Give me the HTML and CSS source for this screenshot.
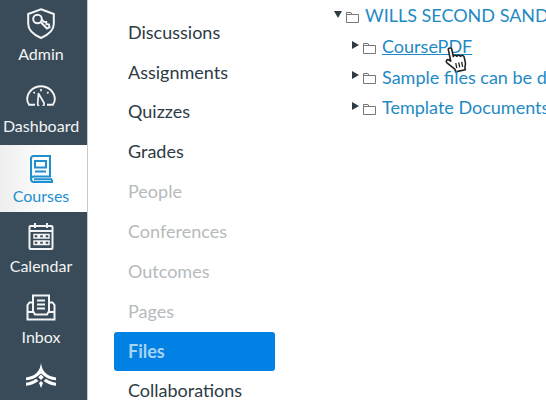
FILE: index.html
```html
<!DOCTYPE html>
<html lang="en">
<head>
<meta charset="utf-8">
<title>Files</title>
<link rel="stylesheet" href="styles.css">
</head>
<body>
<div class="app">
  <nav class="global">
    <a class="gitem admin">
      <svg class="gicon" width="28" height="31" viewBox="0 0 28 31" fill="none" stroke="currentColor" stroke-width="2"><path d="M14 1.200 26.800 6v10c0 6.500-5 10.500-12.800 14C6.200 26.500 1.200 22.500 1.200 16V6z"/><circle cx="10.500" cy="11" r="4.300"/><path d="M13.500 14 20 20.500l2.500-1.200-.6-2.800-2.400-.3-.3-2.200-2.400-.3-2.300-2.200"/></svg>
      <span>Admin</span>
    </a>
    <a class="gitem dash">
      <svg class="gicon" width="30" height="21" viewBox="0 0 30 21" fill="none" stroke="currentColor" stroke-width="1.900"><path d="M9 19.800H3.200C1.800 18 1.200 16 1.200 14.500 1.200 7 7.500 1.200 15 1.200S28.800 7 28.800 14.500c0 1.500-.6 3.500-2 5.300H21"/><path d="M12.500 8.500l5 8.500a3.200 3.200 0 1 1-5.800 1.500z" stroke-width="1.700" stroke-linejoin="round"/><path d="M15 4v2.200M7.500 7l1.300 1.300M22.500 7l-1.300 1.300" stroke-width="1.700"/></svg>
      <span>Dashboard</span>
    </a>
    <a class="gitem courses">
      <svg class="gicon" width="24" height="29" viewBox="0 0 24 29" fill="none" stroke="currentColor" stroke-width="2"><path d="M2 24V3.500A2.500 2.500 0 0 1 4.500 1H21v20.500H4.500A2.700 2.700 0 0 0 2 24a3 3 0 0 0 3 3h18v-2.500"/><rect x="6" y="6" width="11" height="6.500"/><path d="M6 16.500h11M5 24.300h18"/></svg>
      <span>Courses</span>
    </a>
    <a class="gitem cal">
      <svg class="gicon" width="26" height="28" viewBox="0 0 26 28" fill="none" stroke="currentColor" stroke-width="2"><rect x="1.500" y="4" width="23" height="23" rx="1"/><path d="M7 1v5M19 1v5M1.500 9h23"/><path d="M6 12.500h4v3.500H6zM11.500 12.500h4v3.500h-4zM17 12.500h4v3.500h-4zM6 19h4v3.500H6zM11.500 19h4v3.500h-4zM17 19h4v3.500h-4z" stroke-width="1.500"/></svg>
      <span>Calendar</span>
    </a>
    <a class="gitem inbox">
      <svg class="gicon" width="30" height="27" viewBox="0 0 30 27" fill="none" stroke="currentColor" stroke-width="2"><path d="M7 17V1.500h16V17"/><path d="M11 6.500h8M11 10.500h8M11 14.500h8"/><path d="M7 8.500H3.500L1.500 11v14.500h27V11l-2-2.500H23"/><path d="M1.500 18h6l1.500 2.500h12l1.500-2.500h6"/></svg>
      <span>Inbox</span>
    </a>
    <a class="gitem logo">
      <svg class="gicon" width="30" height="25" viewBox="0 0 30 25" fill="#fff"><path d="M15 0c.8 5 2 7.500 4.500 10 2.800 2.600 6 3.800 10.500 4.500v2.800c-5.500-.5-9.500-2.300-12.500-4.800L15 10.500l-2.500 2c-3 2.500-7 4.300-12.500 4.800v-2.800c4.500-.7 7.700-1.900 10.500-4.500C13 7.500 14.200 5 15 0z"/><path d="M15 11.500l2.800 2.800-2.800 2.800-2.800-2.800zM10 15.800c-3 2.200-6 3.400-10 4v3c5-.6 8.700-2.200 12.500-4.800zM20 15.800c3 2.200 6 3.400 10 4v3c-5-.6-8.700-2.200-12.500-4.800z"/><path d="M15 18l2 2-2 5-2-5z"/></svg>
    </a>
  </nav>
  <nav class="course">
    <a class="citem">Discussions</a>
    <a class="citem">Assignments</a>
    <a class="citem">Quizzes</a>
    <a class="citem">Grades</a>
    <a class="citem off">People</a>
    <a class="citem off">Conferences</a>
    <a class="citem off">Outcomes</a>
    <a class="citem off">Pages</a>
    <a class="citem active">Files</a>
    <a class="citem">Collaborations</a>
  </nav>
  <main class="tree">
    <div class="row root">
      <svg class="arrow" width="8" height="7" viewBox="0 0 8 7"><path d="M0 0h8L4 7z"/></svg>
      <svg class="folder" width="13" height="12" viewBox="0 0 13 12" fill="none" stroke="#777" stroke-width="1"><path d="M.5 11.500V1.500h4.500l1 2h6.500v8zM.5 3.500h5.500"/></svg>
      <a class="name">WILLS SECOND SANDBOX</a>
    </div>
    <div class="row child">
      <svg class="arrow" width="7" height="8" viewBox="0 0 7 8"><path d="M0 0l7 4-7 4z"/></svg>
      <svg class="folder" width="13" height="12" viewBox="0 0 13 12" fill="none" stroke="#777" stroke-width="1"><path d="M.5 11.500V1.500h4.500l1 2h6.500v8zM.5 3.500h5.500"/></svg>
      <a class="name hover">CoursePDF</a>
      <svg class="cursor" width="24" height="27" viewBox="0 0 24 27"><path d="M6.500 2.500c0-2 3.500-2 3.500 0V10c1-1.500 3-1 3.500.5 1-1.200 3-.8 3.500 .8 1.200-1 3.500-.3 3.500 1.700v5.500c0 2-1 3-1.500 5v2H9v-2.500L2.500 15c-1.500-2 .8-4 2.500-2.500l1.500 1.500z" fill="#fff" stroke="#222" stroke-width="1.600" stroke-linejoin="round"/><path d="M11 17v5M14 17v5M17 17v5" stroke="#222" stroke-width="1.300"/></svg>
    </div>
    <div class="row child">
      <svg class="arrow" width="7" height="8" viewBox="0 0 7 8"><path d="M0 0l7 4-7 4z"/></svg>
      <svg class="folder" width="13" height="12" viewBox="0 0 13 12" fill="none" stroke="#777" stroke-width="1"><path d="M.5 11.500V1.500h4.500l1 2h6.500v8zM.5 3.500h5.500"/></svg>
      <a class="name">Sample files can be deleted</a>
    </div>
    <div class="row child">
      <svg class="arrow" width="7" height="8" viewBox="0 0 7 8"><path d="M0 0l7 4-7 4z"/></svg>
      <svg class="folder" width="13" height="12" viewBox="0 0 13 12" fill="none" stroke="#777" stroke-width="1"><path d="M.5 11.500V1.500h4.500l1 2h6.500v8zM.5 3.500h5.500"/></svg>
      <a class="name">Template Documents</a>
    </div>
  </main>
</div>
</body>
</html>
```
FILE: styles.css
```css
html, body {
  margin: 0;
  padding: 0;
  height: 100%;
  overflow: hidden;
  background: #fff;
}

.app {
  display: flex;
  width: 546px;
  height: 400px;
  overflow: hidden;
  font-family: Lato, "Liberation Sans", sans-serif;
}

.global {
  flex: 0 0 88px;
  box-sizing: border-box;
  display: flex;
  flex-direction: column;
  background: #394b58;
  border-right: 1px solid #c8c8c8;
  color: #fff;
  overflow: hidden;
}

.gitem {
  flex: 0 0 auto;
  box-sizing: border-box;
  display: flex;
  flex-direction: column;
  align-items: center;
  padding-right: 5px;
  font-size: 16px;
  line-height: 20px;
  color: #f2f4f5;
}

.gicon {
  display: block;
}

.admin { height: 73px; padding-top: 8px; }
.admin .gicon { margin-bottom: 5px; }

.dash { height: 72px; padding-top: 12px; }
.dash .gicon { margin-bottom: 10px; }

.courses {
  height: 67px;
  padding-top: 10px;
  background: linear-gradient(90deg, #eeeeee, #ffffff 60%);
  color: #1f8fd0;
}
.courses .gicon { margin-bottom: 2px; }

.cal { height: 72px; padding-top: 10px; }
.cal .gicon { margin-bottom: 6px; }

.inbox { height: 71px; padding-top: 10px; }
.inbox .gicon { margin-bottom: 6px; }

.logo { padding-top: 8px; }

.course {
  flex: 0 0 188px;
  display: flex;
  flex-direction: column;
  box-sizing: border-box;
  padding: 12.800px 0 0 26px;
}

.citem {
  flex: 0 0 39.850px;
  box-sizing: border-box;
  width: 161px;
  padding-left: 14px;
  font-size: 18px;
  line-height: 39px;
  color: #2d3b45;
}

.citem.off {
  color: #b5babd;
}

.citem.active {
  background: #0081e3;
  color: #a9d3f2;
  font-weight: 700;
  border-radius: 3px;
}

.tree {
  flex: 1;
  min-width: 0;
  padding: 5px 0 0 58px;
  overflow: hidden;
}

.row {
  position: relative;
  display: flex;
  align-items: center;
  height: 30.500px;
  white-space: nowrap;
  color: #222;
  font-size: 18px;
}

.root {
  height: 20px;
  margin-bottom: 6px;
}

.child {
  padding-left: 18px;
}

.arrow {
  flex: none;
  margin-right: 4px;
  fill: #2d3b45;
}

.root .folder {
  margin-top: 3px;
}

.root .arrow {
  margin-top: -2px;
}

.child .folder {
  margin-top: 3px;
}

.child .arrow {
  margin-top: -3px;
}

.folder {
  flex: none;
  margin-right: 6px;
}

.name {
  color: #1f8ac5;
  line-height: 22px;
}

.hover {
  text-decoration: underline;
}

.cursor {
  position: absolute;
  left: 110px;
  top: 15px;
  transform: rotate(-12deg);
}
```
